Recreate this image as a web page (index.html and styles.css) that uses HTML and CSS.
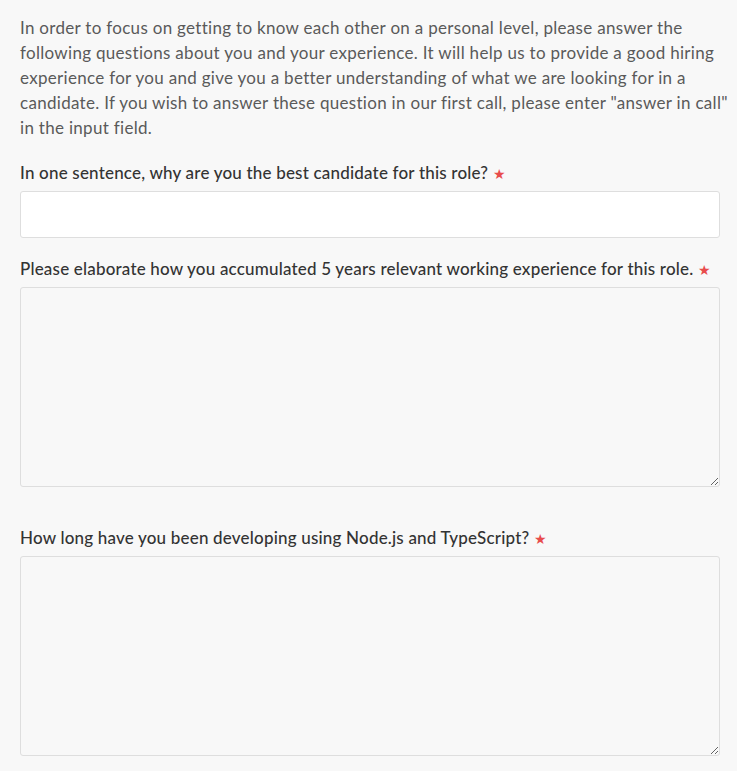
FILE: index.html
```html
<!DOCTYPE html>
<html lang="en">
<head>
<meta charset="utf-8">
<link rel="stylesheet" href="styles.css">
</head>
<body>
<div class="page">
  <p class="intro">In order to focus on getting to know each other on a personal level, please answer the<br>following questions about you and your experience. It will help us to provide a good hiring<br>experience for you and give you a better understanding of what we are looking for in a<br>candidate. If you wish to answer these question in our first call, please enter "answer in call"<br>in the input field.</p>

  <div class="field">
    <label class="label">In one sentence, why are you the best candidate for this role? <span class="req">★</span></label>
    <input class="input" type="text">
  </div>

  <div class="field">
    <label class="label">Please elaborate how you accumulated 5 years relevant working experience for this role. <span class="req">★</span></label>
    <textarea class="area"></textarea>
  </div>

  <div class="field">
    <label class="label">How long have you been developing using Node.js and TypeScript? <span class="req">★</span></label>
    <textarea class="area"></textarea>
  </div>
</div>
</body>
</html>
```
FILE: styles.css
```css
html, body {
  margin: 0;
  padding: 0;
  background: #f8f8f8;
}
.page {
  padding: 15px 17px 0 20px;
  font-family: Lato, "Open Sans", sans-serif;
}
.intro {
  margin: 0 0 20px 0;
  font-size: 17px;
  line-height: 25px;
  letter-spacing: 0.3px;
  white-space: nowrap;
  color: #5a5a5a;
}
.field {
  display: flex;
  flex-direction: column;
  margin-bottom: 18px;
}
.label {
  font-size: 17px;
  line-height: 25px;
  height: 25px;
  letter-spacing: 0.19px;
  color: #333;
  font-weight: 500;
  margin-bottom: 6px;
}
.req {
  color: #e84c4c;
  font-size: 14px;
  line-height: 1;
  vertical-align: 0;
}
.input {
  box-sizing: border-box;
  height: 47px;
  width: 700px;
  border: 1px solid #dedede;
  border-radius: 3px;
  background: #fff;
  margin: 0;
}
.area {
  box-sizing: border-box;
  height: 200px;
  width: 700px;
  border: 1px solid #dedede;
  border-radius: 3px;
  background: #f8f8f8;
  margin: 0 0 20px 0;
  resize: vertical;
}
```
